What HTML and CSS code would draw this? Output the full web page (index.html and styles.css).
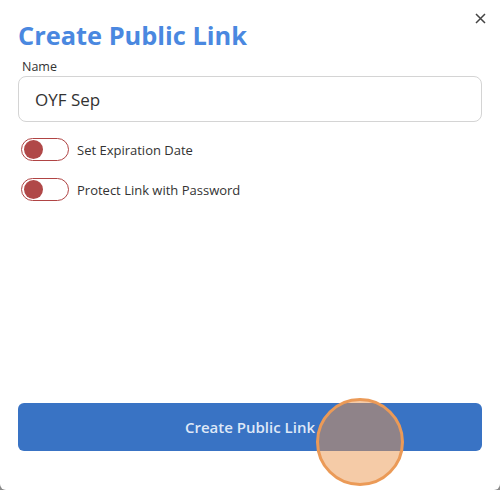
FILE: index.html
```html
<!DOCTYPE html>
<html>
<head>
<meta charset="utf-8">
<link rel="stylesheet" href="styles.css">
</head>
<body>
<div class="dialog">
  <button class="close" aria-label="Close">
    <svg width="11" height="11" viewBox="0 0 11 11"><path d="M1 1 L10 10 M10 1 L1 10" stroke="#444" stroke-width="1.5" fill="none"/></svg>
  </button>
  <h1 class="title">Create Public Link</h1>
  <label class="label">Name</label>
  <div class="input">OYF Sep</div>
  <div class="options">
    <div class="option"><span class="toggle"><span class="knob"></span></span><span class="opt-text">Set Expiration Date</span></div>
    <div class="option"><span class="toggle"><span class="knob"></span></span><span class="opt-text">Protect Link with Password</span></div>
  </div>
  <div class="spacer"></div>
  <button class="primary">Create Public Link</button>
  <div class="cursor"></div>
</div>
</body>
</html>
```
FILE: styles.css
```css
html, body { margin: 0; padding: 0; }
body {
  background: #8a8a8a;
  width: 500px;
  height: 490px;
  overflow: hidden;
  font-family: "Open Sans", "Liberation Sans", sans-serif;
}
.dialog {
  position: relative;
  box-sizing: border-box;
  width: 500px;
  height: 490px;
  background: #fff;
  border-radius: 0 0 6px 6px;
  padding: 20px 18px 39px 18px;
  display: flex;
  flex-direction: column;
}
.close {
  position: absolute;
  top: 13px;
  right: 14px;
  border: 0;
  background: none;
  padding: 0;
  width: 11px;
  height: 11px;
  display: flex;
}
.title {
  margin: 0;
  font-size: 25.4px;
  font-weight: 700;
  color: #4a88e0;
  line-height: 30px;
}
.label {
  margin-top: 9px;
  margin-left: 4px;
  font-size: 12.5px;
  color: #333;
  line-height: 16px;
}
.input {
  margin-top: 1px;
  height: 46px;
  box-sizing: border-box;
  border: 1px solid #d4d4d4;
  border-radius: 8px;
  padding-left: 16px;
  font-size: 17px;
  color: #333;
  display: flex;
  align-items: center;
}
.options {
  margin-top: 16px;
  display: flex;
  flex-direction: column;
  gap: 17px;
  padding-left: 3px;
}
.option {
  display: flex;
  align-items: center;
  height: 23px;
}
.toggle {
  box-sizing: border-box;
  width: 48px;
  height: 23px;
  border: 1.5px solid #b04444;
  border-radius: 12px;
  display: flex;
  align-items: center;
  padding-left: 2px;
}
.knob {
  width: 19px;
  height: 19px;
  border-radius: 50%;
  background: #b04848;
}
.opt-text {
  margin-left: 8px;
  font-size: 13px;
  color: #333;
}
.spacer { flex: 1; }
.primary {
  height: 48px;
  border: 0;
  border-radius: 6px;
  background: #3973c4;
  color: #dfe8f7;
  font-family: "Open Sans", "Liberation Sans", sans-serif;
  font-size: 15px;
  font-weight: 600;
}
.cursor {
  position: absolute;
  left: 316px;
  top: 398px;
  width: 88px;
  height: 88px;
  box-sizing: border-box;
  border-radius: 50%;
  border: 3px solid #eb9a57;
  background: rgba(234, 148, 74, 0.485);
}
```
